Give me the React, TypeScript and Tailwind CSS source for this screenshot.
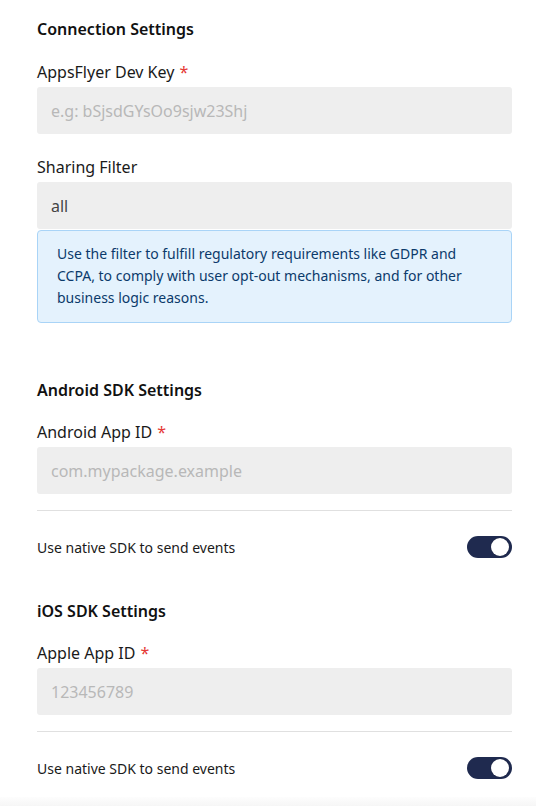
import React from 'react';

const font = { fontFamily: '"Noto Sans", "Open Sans", sans-serif' };

function Label({ text, required }: { text: string; required?: boolean }) {
  return (
    <div className="text-[16px] leading-[22px] text-[#1a1a1a] mb-[4px]">
      {text}
      {required && <span className="text-[#e53935] ml-[5px]">*</span>}
    </div>
  );
}

function Field({ value, placeholder }: { value?: string; placeholder?: string }) {
  return (
    <div className="h-[47px] rounded-[3px] bg-[#eeeeee] flex items-center px-[14px] text-[16px]">
      {value ? (
        <span className="text-[#444444]">{value}</span>
      ) : (
        <span className="text-[#b8b8b8]">{placeholder}</span>
      )}
    </div>
  );
}

function Toggle() {
  return (
    <div className="relative w-[45px] h-[22px] rounded-full bg-[#1f2a4f]">
      <div className="absolute right-[3px] top-[2px] w-[18px] h-[18px] rounded-full bg-white shadow-[0_0_1px_rgba(0,0,0,0.4)]" />
    </div>
  );
}

function NativeRow() {
  return (
    <>
      <div className="h-px bg-[#e0e0e0] mt-[16px]" />
      <div className="flex items-center justify-between h-[22px] mt-[25px]">
        <span className="text-[14px] text-[#1a1a1a]">Use native SDK to send events</span>
        <Toggle />
      </div>
    </>
  );
}

export default function App() {
  return (
    <div className="w-[536px] h-[806px] bg-white flex flex-col" style={font}>
      <div className="flex-1 pl-[37px] pr-[24px] pt-[18px]">
        <h2 className="text-[16px] leading-[22px] font-semibold text-[#111]">Connection Settings</h2>

        <div className="mt-[21px]">
          <Label text="AppsFlyer Dev Key" required />
          <Field placeholder="e.g: bSjsdGYsOo9sjw23Shj" />
        </div>

        <div className="mt-[22px]">
          <Label text="Sharing Filter" />
          <Field value="all" />
          <div className="mt-px rounded-[4px] border border-[#a9d4f7] bg-[#e4f2fd] px-[19px] pt-[12px] pb-[13px] text-[14px] leading-[22px] text-[#0b3a6b]">
            Use the filter to fulfill regulatory requirements like GDPR and CCPA, to comply with user opt-out mechanisms, and for other business logic reasons.
          </div>
        </div>

        <h2 className="mt-[56px] text-[16px] leading-[22px] font-semibold text-[#111]">Android SDK Settings</h2>
        <div className="mt-[20px]">
          <Label text="Android App ID" required />
          <Field placeholder="com.mypackage.example" />
        </div>
        <NativeRow />

        <h2 className="mt-[42px] text-[16px] leading-[22px] font-semibold text-[#111]">iOS SDK Settings</h2>
        <div className="mt-[20px]">
          <Label text="Apple App ID" required />
          <Field placeholder="123456789" />
        </div>
        <NativeRow />
      </div>
      <div className="h-[9px] bg-gradient-to-b from-[#fdfdfd] to-[#f6f6f6]" />
    </div>
  );
}
